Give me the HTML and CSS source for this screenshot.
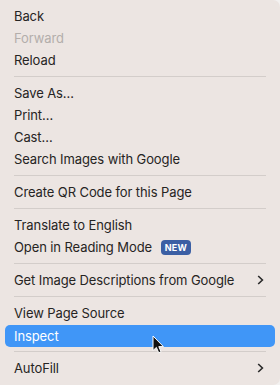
FILE: index.html
```html
<!DOCTYPE html>
<html lang="en">
<head>
  <meta charset="UTF-8">
  <meta name="viewport" content="width=device-width, initial-scale=1.0">
  <title>Context Menu</title>
  <link rel="stylesheet" href="styles.css">
</head>
<body>
  <div class="menu">
    <div class="menu-item">Back</div>
    <div class="menu-item disabled">Forward</div>
    <div class="menu-item">Reload</div>
    <div class="separator"></div>

    <div class="menu-item">Save As…</div>
    <div class="menu-item">Print…</div>
    <div class="menu-item">Cast…</div>
    <div class="menu-item">Search Images with Google</div>
    <div class="separator"></div>

    <div class="menu-item">Create QR Code for this Page</div>
    <div class="separator"></div>

    <div class="menu-item">Translate to English</div>
    <div class="menu-item">Open in Reading Mode <span class="badge">NEW</span></div>
    <div class="separator"></div>

    <div class="menu-item has-sub">Get Image Descriptions from Google
      <svg class="chevron" width="7" height="10" viewBox="0 0 7 10"><path d="M1.2 1 L5.4 5 L1.2 9" fill="none" stroke="#2a2a2a" stroke-width="1.6"/></svg>
    </div>
    <div class="separator"></div>

    <div class="menu-item">View Page Source</div>
    <div class="menu-item active">Inspect</div>
    <div class="separator"></div>

    <div class="menu-item has-sub">AutoFill
      <svg class="chevron" width="7" height="10" viewBox="0 0 7 10"><path d="M1.2 1 L5.4 5 L1.2 9" fill="none" stroke="#2a2a2a" stroke-width="1.6"/></svg>
    </div>
  </div>

  <!-- cursor over the Inspect item -->
  <svg class="cursor" width="13" height="20" viewBox="0 0 13 20">
    <path d="M1 1 L1 15.5 L4.4 12.4 L6.7 17.8 L9 16.8 L6.8 11.6 L11.4 11.6 Z" fill="#111" stroke="#fff" stroke-width="1" stroke-linejoin="round"/>
  </svg>
</body>
</html>
```

FILE: styles.css
```css
html, body {
  margin: 0;
  padding: 0;
}

body {
  width: 280px;
  height: 385px;
  background-color: #f3f1f0;
  font-family: 'Inter', 'Noto Sans', sans-serif;
  font-size: 13px;
  color: #262423;
  overflow: hidden;
  position: relative;
}

.menu {
  height: 385px;
  box-sizing: border-box;
  padding: 5px 5px 0 5px;
  background-color: #ece5e2;
  border-radius: 0 7px 7px 0;
}

.menu-item {
  display: flex;
  align-items: center;
  height: 22px;
  padding: 0 11px 0 9px;
  border-radius: 5px;
  white-space: nowrap;
  letter-spacing: -0.1px;
}

.menu-item.disabled {
  color: #b3aeab;
}

.menu-item.active {
  background-color: #4096f7;
  color: #fff;
  margin-top: 1px;
  margin-bottom: -1px;
}

.has-sub {
  justify-content: space-between;
}

.separator {
  height: 1px;
  margin: 5px 9px 5px 9px;
  background-color: #d3cdca;
}

/* Etiqueta "NEW" */
.badge {
  display: inline-block;
  margin-left: 9px;
  width: 30px;
  height: 15px;
  line-height: 15px;
  text-align: center;
  border-radius: 4px;
  background-color: #3b5fa4;
  color: #fff;
  font-size: 9px;
  font-weight: 700;
  letter-spacing: 0.3px;
}

.cursor {
  position: absolute;
  left: 152px;
  top: 335px;
}
```
